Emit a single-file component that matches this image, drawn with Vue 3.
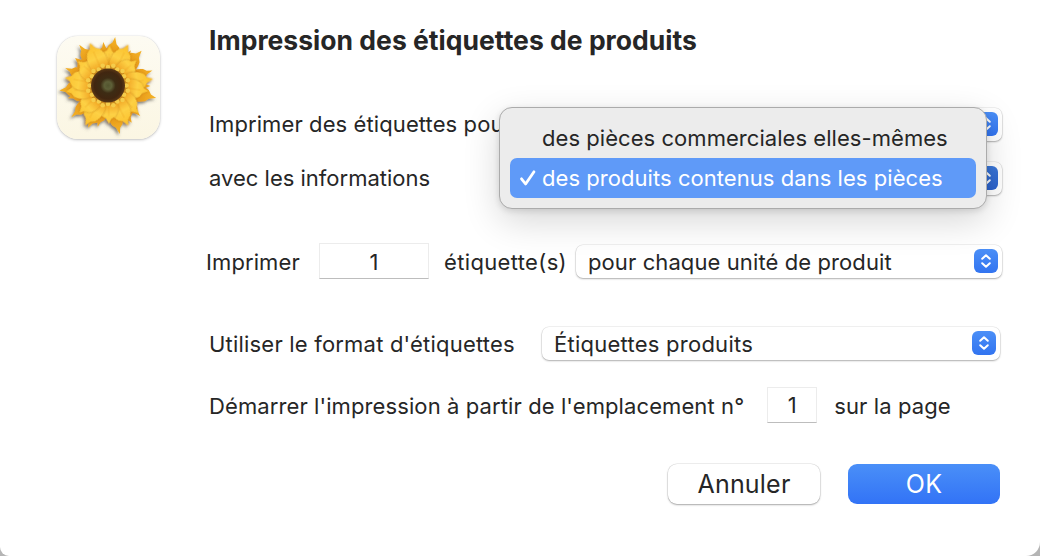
<script setup>
function petals(n, base, offset, width, seed) {
  const out = []
  for (let i = 0; i < n; i++) {
    const len = base + Math.sin((i + 1) * seed) * 4
    const a = offset + (360 / n) * i + Math.cos((i + 2) * seed) * 5
    const w = width + Math.sin(i * seed * 1.7) * 1.5
    const d = `M0 -12 C${-w * 0.95} ${-len * 0.35} ${-w * 1.15} ${-len * 0.62} ${-w * 0.6} ${-len * 0.82} L${-w * 0.22} ${-len * 0.88} L0 ${-len} L${w * 0.28} ${-len * 0.86} L${w * 0.65} ${-len * 0.8} C${w * 1.15} ${-len * 0.6} ${w * 0.95} ${-len * 0.35} 0 -12Z`
    out.push({ d, t: `rotate(${a.toFixed(1)})`, vein: `M0 -18 L0 ${-len * 0.8}` })
  }
  return out
}
const back = petals(18, 46, 9, 8.5, 2.3)
const front = petals(14, 42, 0, 10.5, 3.7)
const seeds = Array.from({ length: 24 }, (_, i) => {
  const a = (i / 24) * Math.PI * 2
  const r = 18.5 + (i % 2) * 2
  return { x: (Math.cos(a) * r).toFixed(1), y: (Math.sin(a) * r).toFixed(1) }
})
</script>

<template>
  <div class="dialog">
    <div class="icon-col">
      <div class="app-icon">
        <svg width="103" height="103" viewBox="-51 -49.5 103 103">
          <defs>
            <linearGradient id="petalBack" gradientUnits="userSpaceOnUse" x1="0" y1="-46" x2="0" y2="-12">
              <stop offset="0" stop-color="#f3b024" />
              <stop offset="1" stop-color="#d4780e" />
            </linearGradient>
            <linearGradient id="petalFront" gradientUnits="userSpaceOnUse" x1="0" y1="-44" x2="0" y2="-14">
              <stop offset="0" stop-color="#fbc02c" />
              <stop offset="0.5" stop-color="#fdd145" />
              <stop offset="1" stop-color="#ec9416" />
            </linearGradient>
            <radialGradient id="disc">
              <stop offset="0" stop-color="#53552f" />
              <stop offset="0.22" stop-color="#5e6038" />
              <stop offset="0.45" stop-color="#3d2c14" />
              <stop offset="0.8" stop-color="#412610" />
              <stop offset="1" stop-color="#5a3816" />
            </radialGradient>
            <filter id="soft" x="-20%" y="-20%" width="140%" height="140%">
              <feDropShadow dx="-1.5" dy="2" stdDeviation="1.8" flood-color="#4d4a44" flood-opacity="0.7" />
            </filter>
            <filter id="inner" x="-30%" y="-30%" width="160%" height="160%">
              <feDropShadow dx="0" dy="0" stdDeviation="0.8" flood-color="#b86a08" flood-opacity="0.75" />
            </filter>
          </defs>
          <g filter="url(#soft)">
            <path v-for="(p, i) in back" :key="'b' + i" :d="p.d" :transform="p.t" fill="url(#petalBack)" />
            <g v-for="(p, i) in front" :key="'f' + i" :transform="p.t" filter="url(#inner)">
              <path :d="p.d" fill="url(#petalFront)" />
              <path :d="p.vein" stroke="#e6951a" stroke-width="0.7" fill="none" opacity="0.5" />
            </g>
          </g>
          <circle r="20" fill="#c98a1e" />
          <circle v-for="(s, i) in seeds" :key="'s' + i" :cx="s.x" :cy="s.y" r="2.3" fill="#f5cc4a" />
          <circle r="17" fill="url(#disc)" />
        </svg>
      </div>
    </div>

    <div class="content">
      <h1 class="title">Impression des étiquettes de produits</h1>

      <div class="row row-first">
        <span class="label">Imprimer des étiquettes pour</span>
        <div class="select select-top">
          <span class="value"></span>
          <span class="stepper">
            <svg width="12" height="18" viewBox="0 0 12 18"><path d="M2.2 6.8 6 3.2l3.8 3.6M2.2 11.2 6 14.8l3.8-3.6" /></svg>
          </span>
        </div>
      </div>

      <div class="row row-second">
        <span class="label second-label">avec les informations</span>
        <div class="select select-top">
          <span class="value"></span>
          <span class="stepper stepper-dim">
            <svg width="12" height="18" viewBox="0 0 12 18"><path d="M2.2 6.8 6 3.2l3.8 3.6M2.2 11.2 6 14.8l3.8-3.6" /></svg>
          </span>
        </div>
      </div>

      <div class="row row-print">
        <span class="label print-label">Imprimer</span>
        <div class="field field-wide">1</div>
        <span class="label unit-label">étiquette(s)</span>
        <div class="select select-unit">
          <span class="value">pour chaque unité de produit</span>
          <span class="stepper">
            <svg width="12" height="18" viewBox="0 0 12 18"><path d="M2.2 6.8 6 3.2l3.8 3.6M2.2 11.2 6 14.8l3.8-3.6" /></svg>
          </span>
        </div>
      </div>

      <div class="row row-format">
        <span class="label format-label">Utiliser le format d'étiquettes</span>
        <div class="select select-format">
          <span class="value format-value">Étiquettes produits</span>
          <span class="stepper">
            <svg width="12" height="18" viewBox="0 0 12 18"><path d="M2.2 6.8 6 3.2l3.8 3.6M2.2 11.2 6 14.8l3.8-3.6" /></svg>
          </span>
        </div>
      </div>

      <div class="row row-start">
        <span class="label">Démarrer l'impression à partir de l'emplacement n°</span>
        <div class="field field-small">1</div>
        <span class="label">sur la page</span>
      </div>

      <div class="actions">
        <button class="btn btn-cancel">Annuler</button>
        <button class="btn btn-ok">OK</button>
      </div>
    </div>

    <div class="menu">
      <div class="menu-item">des pièces commerciales elles-mêmes</div>
      <div class="menu-item selected">
        <svg class="check" width="18" height="18" viewBox="0 0 18 18"><path d="M2.5 9.8 6.6 15 15 2.8" /></svg>
        des produits contenus dans les pièces
      </div>
    </div>
  </div>
</template>

<style>
html, body { margin: 0; background: #b5b5b5; }
</style>

<style scoped>
.dialog {
  position: relative;
  width: 1040px;
  height: 556px;
  box-sizing: border-box;
  overflow: hidden;
  display: flex;
  background: #ffffff;
  border-radius: 0 0 14px 9px;
  font-family: Inter, "Liberation Sans", sans-serif;
  color: #262626;
  font-size: 22px;
  letter-spacing: .1px;
}
.icon-col { width: 206px; flex: none; padding: 36px 0 0 57px; box-sizing: border-box; }
.app-icon {
  width: 103px;
  height: 103px;
  border-radius: 21px;
  background: linear-gradient(#fdfbf2, #fbf6e3);
  box-shadow: 0 0 1px rgba(0,0,0,.25), 0 1px 3px rgba(0,0,0,.22);
  overflow: hidden;
}
.app-icon svg { display: block; }
.content { flex: 1; display: flex; flex-direction: column; min-width: 0; padding-right: 37px; }
.title { margin: 25px 0 0 3px; font-size: 26.5px; line-height: 30px; font-weight: 700; letter-spacing: .02px; color: #262626; white-space: nowrap; }
.row { display: flex; align-items: center; white-space: nowrap; }
.label { line-height: 24px; }
.second-label { letter-spacing: 0; }
.row-first { margin: 53px 0 0 3px; height: 32px; padding-right: 1px; justify-content: space-between; }
.row-second { margin: 22px 0 0 3px; height: 32px; padding-right: 1px; justify-content: space-between; }
.row-print { margin-top: 49px; height: 36px; }
.row-print .label, .row-print .field, .row-print .value { padding-top: 2px; box-sizing: border-box; }
.print-label { width: 113px; }
.unit-label { flex: none; width: 122px; margin: 0 10px 0 15px; letter-spacing: .35px; }
.select-unit .value { margin-left: -1px; }
.row-format { margin: 47px 0 0 3px; height: 34px; padding-right: 3px; justify-content: space-between; }
.row-format .label, .row-format .value { padding-top: 1px; }
.format-label { letter-spacing: .2px; }
.format-value { letter-spacing: .25px; margin-left: -1px; }
.row-start { margin: 27px 0 0 3px; height: 36px; }
.row-start .label { padding-top: 1px; }
.select {
  box-sizing: border-box;
  height: 33px;
  display: flex;
  align-items: center;
  justify-content: space-between;
  padding: 0 4px 0 13px;
  background: #fff;
  border-radius: 7px;
  box-shadow: 0 0 0 .5px rgba(0,0,0,.1), 0 1px 2px rgba(0,0,0,.28);
}
.select-top { width: 473px; }
.select-unit { width: 426px; }
.select-format { width: 458px; }
.stepper {
  width: 24px;
  height: 24px;
  border-radius: 6px;
  background: linear-gradient(#4b8ff7, #3274f0);
  display: flex;
  align-items: center;
  justify-content: center;
}
.stepper-dim { background: linear-gradient(#3a76d8, #2c62cc); }
.stepper svg path { fill: none; stroke: #fff; stroke-width: 2; stroke-linecap: round; stroke-linejoin: round; }
.field {
  box-sizing: border-box;
  height: 36px;
  display: flex;
  align-items: center;
  justify-content: center;
  background: #fff;
  border: 1px solid #ececec;
  border-bottom: 1px solid #bdbdbd;
}
.field-wide { flex: none; width: 110px; }
.field-small { flex: none; width: 50px; margin: 0 17px 0 23px; }
.actions { display: flex; justify-content: flex-end; gap: 28px; margin-top: 41px; padding-right: 3px; }
.btn {
  width: 152px;
  height: 40px;
  border: 0;
  border-radius: 9px;
  font: inherit;
  font-size: 25px;
  letter-spacing: .2px;
  padding: 0;
}
.btn-cancel { background: #fff; color: #262626; box-shadow: 0 0 0 .5px rgba(0,0,0,.12), 0 1px 2px rgba(0,0,0,.3); }
.btn-ok { background: linear-gradient(#4a8ff8, #3273f6); color: #fff; }
.menu {
  position: absolute;
  left: 499px;
  top: 107px;
  width: 488px;
  height: 102px;
  box-sizing: border-box;
  padding: 10px 10px 0;
  background: #ececec;
  border: 1px solid #ababab;
  border-radius: 13px;
  box-shadow: 0 12px 36px rgba(0,0,0,.16), 0 2px 6px rgba(0,0,0,.12);
}
.menu-item {
  position: relative;
  height: 40px;
  line-height: 40px;
  padding-left: 32px;
  white-space: nowrap;
  border-radius: 7px;
  font-size: 22px;
  letter-spacing: .05px;
}
.menu-item.selected { background: #5f9af8; color: #fff; }
.check { position: absolute; left: 9px; top: 11px; }
.check path { fill: none; stroke: #fff; stroke-width: 2.8; stroke-linecap: round; stroke-linejoin: round; }
</style>
